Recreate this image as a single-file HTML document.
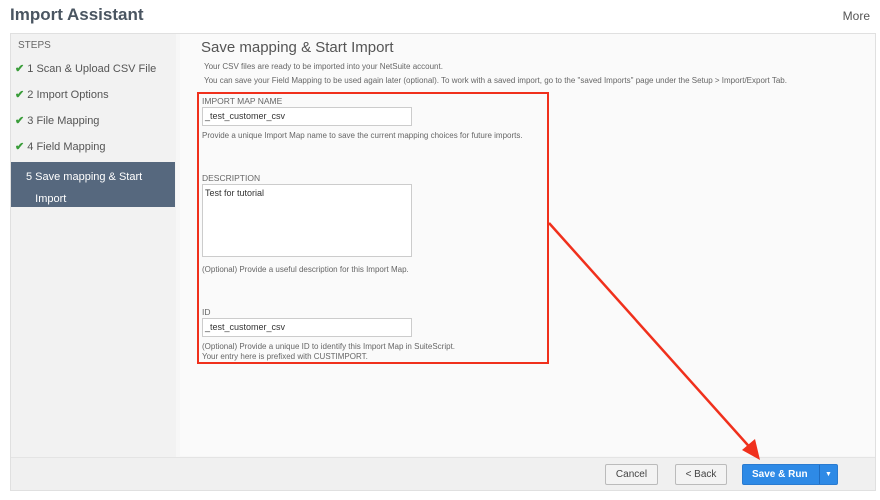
<!DOCTYPE html>
<html><head><style>
*{margin:0;padding:0;box-sizing:border-box}
body{width:880px;height:500px;background:#fff;font-family:"Liberation Sans",sans-serif;position:relative;overflow:hidden;color:#555}
.a{position:absolute}
.title{left:10px;top:5px;font-size:17px;font-weight:bold;color:#4a5561}
.more{right:10px;top:9px;font-size:12px;color:#555}
.panel{left:10px;top:33px;width:866px;height:458px;border:1px solid #e0e0e0;background:#f7f7f7}
.side{left:11px;top:34px;width:165px;height:456px;background:#f2f2f2}
.content{left:180px;top:34px;width:695px;height:422px;background:#fafafa}
.footer{left:11px;top:457px;width:864px;height:33px;background:#f0f0f0;border-top:1px solid #e4e4e4}
.step{left:15px;font-size:11px;color:#555}
.ck{color:#3a9d3a;font-weight:bold}
.active{left:11px;top:162px;width:164px;height:45px;background:#56687e;color:#fff;font-size:11px;padding:4px 0 0 15px;line-height:22px}
.h{left:201px;top:39px;font-size:15px;color:#555}
.s{font-size:8px;color:#666}
.lbl{font-size:8.5px;color:#666}
.inp{background:#fff;border:1px solid #ccc;font-size:9px;color:#333;padding:3px 2px}
.btn{top:464px;height:21px;border:1px solid #bbb;border-radius:2px;background:#f3f3f3;font-size:10px;color:#444;text-align:center;line-height:19px}
</style></head><body>
<div class="a title">Import Assistant</div>
<div class="a more">More</div>
<div class="a panel"></div>
<div class="a side"></div>
<div class="a content"></div>
<div class="a footer"></div>
<div class="a step" style="top:40px;left:18px;font-size:10px;color:#666">STEPS</div>
<div class="a step" style="top:62px"><span class="ck">✔</span> 1 Scan &amp; Upload CSV File</div>
<div class="a step" style="top:88px"><span class="ck">✔</span> 2 Import Options</div>
<div class="a step" style="top:114px"><span class="ck">✔</span> 3 File Mapping</div>
<div class="a step" style="top:140px"><span class="ck">✔</span> 4 Field Mapping</div>
<div class="a active">5 Save mapping &amp; Start<br>&nbsp;&nbsp;&nbsp;Import</div>
<div class="a h">Save mapping &amp; Start Import</div>
<div class="a s" style="left:204px;top:62px">Your CSV files are ready to be imported into your NetSuite account.</div>
<div class="a s" style="left:204px;top:76px">You can save your Field Mapping to be used again later (optional). To work with a saved import, go to the "saved Imports" page under the Setup &gt; Import/Export Tab.</div>
<div class="a" style="left:197px;top:92px;width:352px;height:272px;border:2px solid #f0301c"></div>
<div class="a lbl" style="left:202px;top:96px">IMPORT MAP NAME</div>
<div class="a inp" style="left:202px;top:107px;width:210px;height:19px">_test_customer_csv</div>
<div class="a s" style="left:202px;top:131px">Provide a unique Import Map name to save the current mapping choices for future imports.</div>
<div class="a lbl" style="left:202px;top:173px">DESCRIPTION</div>
<div class="a inp" style="left:202px;top:184px;width:210px;height:73px">Test for tutorial</div>
<div class="a s" style="left:202px;top:265px">(Optional) Provide a useful description for this Import Map.</div>
<div class="a lbl" style="left:202px;top:307px">ID</div>
<div class="a inp" style="left:202px;top:318px;width:210px;height:19px">_test_customer_csv</div>
<div class="a s" style="left:202px;top:342px">(Optional) Provide a unique ID to identify this Import Map in SuiteScript.</div>
<div class="a s" style="left:202px;top:352px">Your entry here is prefixed with CUSTIMPORT.</div>
<svg class="a" style="left:0;top:0" width="880" height="500"><line x1="549" y1="223" x2="754" y2="452" stroke="#f0301c" stroke-width="2.5"/><polygon points="760,460 742,450 755,439" fill="#f0301c"/></svg>
<div class="a btn" style="left:605px;width:53px">Cancel</div>
<div class="a btn" style="left:675px;width:52px">&lt; Back</div>
<div class="a btn" style="left:742px;width:96px;background:#2e8ae6;border-color:#2a7bd0;color:#fff;font-weight:bold;text-align:left;padding-left:9px">Save &amp; Run<span style="position:absolute;left:76px;top:0;width:1px;height:19px;background:#1f6cc0"></span><span style="position:absolute;left:82px;font-size:7px">▼</span></div>
</body></html>
